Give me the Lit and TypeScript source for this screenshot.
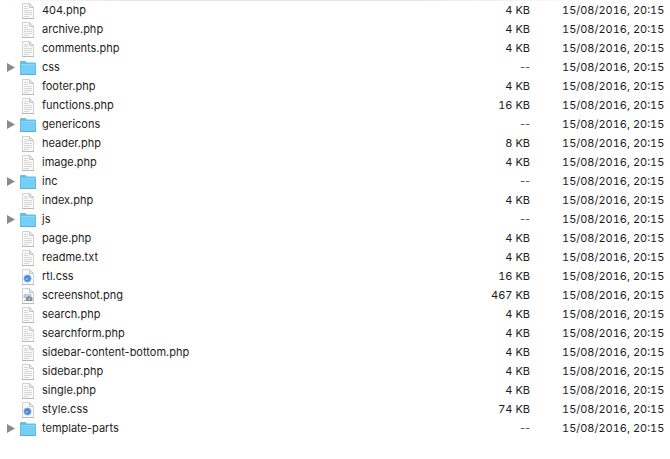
import { LitElement, html, css, svg, nothing } from "lit";
import { customElement } from "lit/decorators.js";
import { classMap } from "lit/directives/class-map.js";

type Kind = "text" | "folder" | "web" | "image";

interface Entry {
  name: string;
  kind: Kind;
  size: string;
}

const MODIFIED = "15/08/2016, 20:15";

const file = (name: string, size = "4 KB", kind: Kind = "text"): Entry => ({ name, kind, size });
const folder = (name: string): Entry => ({ name, kind: "folder", size: "--" });

const ENTRIES: Entry[] = [
  file("404.php"),
  file("archive.php"),
  file("comments.php"),
  folder("css"),
  file("footer.php"),
  file("functions.php", "16 KB"),
  folder("genericons"),
  file("header.php", "8 KB"),
  file("image.php"),
  folder("inc"),
  file("index.php"),
  folder("js"),
  file("page.php"),
  file("readme.txt"),
  file("rtl.css", "16 KB", "web"),
  file("screenshot.png", "467 KB", "image"),
  file("search.php"),
  file("searchform.php"),
  file("sidebar-content-bottom.php"),
  file("sidebar.php"),
  file("single.php"),
  file("style.css", "74 KB", "web"),
  folder("template-parts"),
];

const sheet = svg`
  <path d="M2.5 .5H9.5L13.5 4.5V15.5H2.5Z" fill="#fafafa" stroke="#d2d2d2"/>
  <path d="M2 15.5H14" stroke="#b8b8b8"/>
  <path d="M9.5 .5V4.5H13.5Z" fill="#ececec" stroke="#c6c6c6"/>`;

const marks = {
  text: svg`${sheet}
    <path d="M4 3.5H8M4 5.5H8M4 7.5H12M4 9.5H12M4 11.5H12M4 13.5H9" stroke="#d6d6d6"/>`,
  web: svg`${sheet}
    <circle cx="7.5" cy="9.5" r="3.7" fill="#3a8ee6" stroke="#b4c6da" stroke-width=".6"/>
    <path d="M10 7L8.2 10.2L6.8 8.8Z" fill="#c86f86"/>
    <path d="M5.4 11.6L6.8 8.8L8.2 10.2Z" fill="#a9cff5"/>`,
  image: svg`${sheet}
    <path d="M4 6.3H11V10H4Z" fill="#bccbde" stroke="#b3bcc8" stroke-width=".6"/>
    <path d="M6 9.2H7.2L8 8.2H10L10.8 9.2H12.5V13H6Z" fill="#87919d"/>
    <circle cx="9.2" cy="11" r="1.5" fill="#c9d6e6" stroke="#596675" stroke-width=".6"/>
    <path d="M4 12H5.5V13H4Z" fill="#a4a4a4"/>`,
  folder: svg`
    <path d="M0 2Q0 1 1 1H5.5L7 2.5H15Q16 2.5 16 3.5V15H0Z" fill="#62bfe8"/>
    <path d="M1 5H15V14H1Z" fill="#76cdf5"/>
    <path d="M1 4.5H15" stroke="#8ad6f8"/>
    <path d="M0 14.5H16" stroke="#58b0d8"/>`,
};

@customElement("file-icon")
class FileIcon extends LitElement {
  static properties = { kind: { type: String } };
  declare kind: Kind;

  static styles = css`
    :host {
      display: block;
      flex: none;
      width: 16px;
      height: 16px;
    }
    .icon {
      display: block;
      width: 100%;
      height: 100%;
    }
  `;

  render() {
    return html`<svg class="icon" viewBox="0 0 16 16" aria-hidden="true">${marks[this.kind]}</svg>`;
  }
}

@customElement("app-root")
class AppRoot extends LitElement {
  static styles = css`
    :host {
      display: block;
      min-height: 100vh;
      box-sizing: border-box;
      padding-top: 1px;
      background: linear-gradient(to right, #fff, #e4e4e4 20%, #e4e4e4 60%, #fff 90%) top / 100% 1px no-repeat #fff;
      color: #1c1c1c;
      font: 11px/19px Inter, "Liberation Sans", sans-serif;
    }
    .files {
      width: 100%;
      table-layout: fixed;
      border-collapse: collapse;
    }
    .size-col {
      width: 80px;
    }
    .date-col {
      width: 140px;
    }
    .name,
    .size,
    .date {
      height: 19px;
      padding: 0;
      font-weight: 400;
      text-align: left;
      white-space: nowrap;
    }
    .size,
    .date {
      font-variant-numeric: tabular-nums;
    }
    .size {
      text-align: right;
    }
    .size.unknown {
      color: #555;
      font-variant-numeric: normal;
    }
    .date {
      padding-left: 32px;
    }
    .entry {
      display: flex;
      align-items: center;
      height: 19px;
    }
    .gutter {
      display: flex;
      flex: none;
      width: 20px;
    }
    .toggle {
      display: flex;
      margin: 0 0 0 7px;
      padding: 0;
      border: 0;
      background: none;
    }
    .arrow {
      display: block;
      width: 8px;
      height: 9px;
      fill: #8a8a8a;
    }
    .icon {
      margin-right: 6px;
    }
  `;

  render() {
    return html`
      <table class="files" aria-label="Files">
        <colgroup>
          <col />
          <col class="size-col" />
          <col class="date-col" />
        </colgroup>
        <tbody>
          ${ENTRIES.map(
            (entry) => html`
              <tr>
                <th class="name" scope="row">
                  <div class="entry">
                    <span class="gutter">
                      ${entry.kind === "folder"
                        ? html`<button class="toggle" type="button" aria-expanded="false" aria-label=${`Expand ${entry.name}`}>
                            <svg class="arrow" viewBox="0 0 8 9" aria-hidden="true"><path d="M0 0L8 4.5L0 9Z" /></svg>
                          </button>`
                        : nothing}
                    </span>
                    <file-icon class="icon" .kind=${entry.kind}></file-icon>
                    <span>${entry.name}</span>
                  </div>
                </th>
                <td class=${classMap({ size: true, unknown: entry.kind === "folder" })}>${entry.size}</td>
                <td class="date">${MODIFIED}</td>
              </tr>
            `
          )}
        </tbody>
      </table>
    `;
  }
}
